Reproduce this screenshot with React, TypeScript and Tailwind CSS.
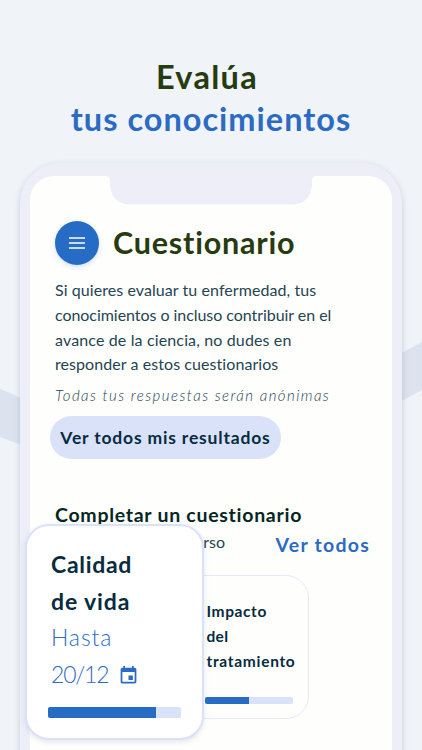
import { clsx } from "clsx";

const paragraph = [
  { text: "Si quieres evaluar tu enfermedad, tus", tracking: "tracking-[0.07px]" },
  { text: "conocimientos o incluso contribuir en el", tracking: "tracking-[-0.05px]" },
  { text: "avance de la ciencia, no dudes en", tracking: "tracking-[0.14px]" },
  { text: "responder a estos cuestionarios", tracking: "tracking-[0.07px]" },
];

const ProgressBar = ({
  value,
  className,
}: {
  value: number;
  className?: string;
}) => (
  <div className={clsx("overflow-hidden rounded-[2px] bg-[#dae2fa]", className)}>
    <div className="h-full bg-[#266cc4]" style={{ width: `${value}%` }} />
  </div>
);

const Background = () => (
  <svg
    className="absolute inset-0"
    width="422"
    height="750"
    viewBox="0 0 422 750"
    aria-hidden="true"
  >
    <path d="M0 389L24 399V446L0 437Z" fill="#dce3ef" />
    <path d="M398 355L422 342V390L398 403Z" fill="#dce3ef" />
  </svg>
);

const Notch = () => (
  <svg
    className="mx-auto block"
    width="212"
    height="29"
    viewBox="0 0 212 29"
    aria-hidden="true"
  >
    <path
      d="M0 0C4 0 5 2 5 6V8C5 20 13 28.500 24 28.500H188C199 28.500 207 20 207 8V6C207 2 208 0 212 0Z"
      fill="#eeeef9"
    />
  </svg>
);

const EventIcon = () => (
  <svg
    className="mt-[3px]"
    width="21"
    height="21"
    viewBox="0 0 24 24"
    fill="#2b6bc4"
    aria-hidden="true"
  >
    <path d="M17 12h-5v5h5v-5zM16 1v2H8V1H6v2H5c-1.110 0-1.990.9-1.990 2L3 19c0 1.100.89 2 2 2h14c1.100 0 2-.9 2-2V5c0-1.100-.9-2-2-2h-1V1h-2zm3 18H5V8h14v11z" />
  </svg>
);

const QualityCard = () => (
  <div className="absolute top-[524px] left-[25px] h-[216px] w-[179px] rounded-[24px] border-2 border-[#dae2fa] bg-white pt-[20px] pl-[24px] shadow-[0_2px_5px_rgba(120,130,190,0.2)]">
    <div className="text-[23px] leading-[36.600px] whitespace-nowrap">
      <p className="font-bold tracking-[0.7px] text-[#062c40]">Calidad</p>
      <p className="font-bold tracking-[0.9px] text-[#062c40]">de vida</p>
      <p className="font-light tracking-[0.9px] text-[#2b6bc4]">Hasta</p>
      <div className="flex items-center gap-[10px] text-[#2b6bc4]">
        <span className="font-light tracking-[-1.2px]">20/12</span>
        <EventIcon />
      </div>
    </div>
    <ProgressBar value={81} className="mt-[14.5px] -ml-[3px] h-[11px] w-[133px]" />
  </div>
);

const ImpactCard = () => (
  <div className="mt-[19px] ml-[128px] h-[144px] w-[151px] rounded-[23px] border border-[#e5eafa] pt-[23px] pl-[46px]">
    <div className="pl-[1.5px] text-[15.500px] leading-[24.800px] font-bold text-[#062c40]">
      <p className="tracking-[0.6px]">Impacto</p>
      <p className="tracking-[0.3px]">del</p>
      <p className="tracking-[0.7px]">tratamiento</p>
    </div>
    <ProgressBar value={50} className="mt-[23.600px] h-[7px] w-[88px]" />
  </div>
);

const App = () => (
  <div className="relative h-[750px] w-[422px] overflow-hidden bg-[#f0f4f8] font-['Lato',sans-serif]">
    <Background />
    <h1 className="relative h-[163px] pt-[56px] text-center text-[32.500px] leading-[42px] font-bold whitespace-nowrap">
      <span className="block pr-[8px] tracking-[1.3px] text-[#263b0e]">Evalúa</span>
      <span className="block tracking-[1px] text-[#2b6bc4]">tus conocimientos</span>
    </h1>
    <div className="relative mx-[20px] h-[640px] rounded-[40px] bg-[#eeeef9] px-[10px] pt-[13px] shadow-[0_2px_6px_rgba(60,70,110,0.22)]">
      <div className="h-[640px] rounded-t-[24px] bg-[#fefefd] whitespace-nowrap">
        <Notch />
        <div className="pl-[25px]">
          <div className="flex h-[44px] items-center gap-[14px] pt-[31px]">
            <button className="flex size-[44px] shrink-0 items-center justify-center rounded-full bg-[#266cc4] shadow-[0_2px_5px_rgba(38,108,196,0.2)]">
              <svg width="18" height="12" viewBox="0 0 18 12" aria-hidden="true">
                <path d="M1 1H17M1 6H17M1 11H17" stroke="white" strokeWidth="1.600" />
              </svg>
            </button>
            <h2 className="text-[30.500px] font-bold tracking-[0.8px] text-[#263b0e]">
              Cuestionario
            </h2>
          </div>
          <div className="mt-[29px] text-[16px] leading-[24.800px] text-[#244553]">
            {paragraph.map(({ text, tracking }) => (
              <p key={text} className={tracking}>
                {text}
              </p>
            ))}
          </div>
          <p className="mt-[6px] text-[15px] leading-[25px] font-light tracking-[1.45px] text-[#244553] italic">
            Todas tus respuestas serán anónimas
          </p>
          <button className="mt-[8px] -ml-[5px] flex h-[43px] w-[231px] items-center justify-center rounded-full bg-[#dae2fa] text-[17.500px] font-bold tracking-[0.82px] text-[#062c40]">
            Ver todos mis resultados
          </button>
          <h3 className="mt-[43px] text-[19.500px] leading-[26px] font-bold tracking-[0.72px] text-[#05271f]">
            Completar un cuestionario
          </h3>
          <div className="flex h-[28px] justify-between pr-[22px]">
            <span className="w-[170px] pt-[1px] text-right text-[16px] leading-[26px] text-[#244553]">
              En curso
            </span>
            <span className="pt-[4px] text-[19.500px] leading-[26px] font-bold tracking-[1.25px] text-[#2b6bc4]">
              Ver todos
            </span>
          </div>
        </div>
        <ImpactCard />
      </div>
    </div>
    <QualityCard />
  </div>
);

export default App;
